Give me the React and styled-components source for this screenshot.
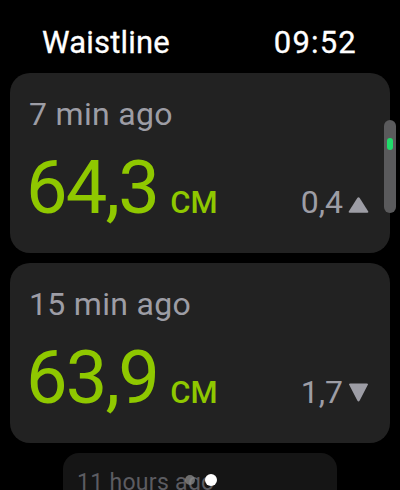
import React from "react";
import styled, { createGlobalStyle } from "styled-components";

const GlobalStyle = createGlobalStyle`
  html, body {
    margin: 0;
    padding: 0;
    background: #000;
  }
  body {
    font-family: Roboto, "Liberation Sans", sans-serif;
    -webkit-font-smoothing: antialiased;
  }
`;

const Screen = styled.div`
  position: relative;
  width: 400px;
  height: 490px;
  overflow: hidden;
  background: #000;
  display: flex;
  flex-direction: column;
`;

const Header = styled.div`
  display: flex;
  justify-content: space-between;
  align-items: baseline;
  padding: 25px 43px 0 42px;
  height: 36px;
  margin-bottom: 12px;
  color: #fff;
  font-size: 31px;
  line-height: 36px;
  font-weight: 400;
`;

const Title = styled.div`
  letter-spacing: 0.2px;
  -webkit-text-stroke: 0.3px #fff;
`;

const Clock = styled.div`
  -webkit-text-stroke: 0.3px #fff;
  font-variant-numeric: tabular-nums;
  letter-spacing: 1.2px;
`;

const List = styled.div`
  display: flex;
  flex-direction: column;
  align-items: center;
  gap: 10px;
`;

const Card = styled.div`
  box-sizing: border-box;
  width: ${(p) => (p.$faded ? "274px" : "380px")};
  height: ${(p) => (p.$faded ? "auto" : "180px")};
  flex-shrink: 0;
  background: ${(p) => (p.$faded ? "#151515" : "#222222")};
  border-radius: ${(p) => (p.$faded ? "16px" : "20px")};
  padding: ${(p) => (p.$faded ? "16px 14px 40px" : "23px 20px 0 19px")};
`;

const Label = styled.div`
  color: ${(p) => (p.$faded ? "#5c5c61" : "#9d9da5")};
  font-size: ${(p) => (p.$faded ? "23px" : "32px")};
  line-height: ${(p) => (p.$faded ? "28px" : "36px")};
  letter-spacing: 0.3px;
`;

const ValueRow = styled.div`
  display: flex;
  align-items: baseline;
  margin-top: 19px;
`;

const Value = styled.span`
  color: #8fc800;
  font-size: 74px;
  line-height: 74px;
  letter-spacing: -1.8px;
  margin-left: -3px;
`;

const Unit = styled.span`
  color: #8fc800;
  font-size: 31px;
  font-weight: 500;
  text-transform: uppercase;
  margin-left: 12px;
`;

const Delta = styled.span`
  margin-left: auto;
  display: flex;
  align-items: baseline;
  color: #9d9da5;
  font-size: 32px;
  line-height: 36px;
`;

const Arrow = styled.svg`
  display: block;
  flex-shrink: 0;
  width: 21px;
  height: ${(p) => (p.$down ? "19px" : "16px")};
  margin-left: 5px;
  margin-right: 1px;
  transform: translateY(${(p) => (p.$down ? "-1px" : "0")});
`;

const ScrollTrack = styled.div`
  position: absolute;
  top: 120px;
  right: 4px;
  width: 12px;
  height: 93px;
  border-radius: 6px;
  background: #5a5a5c;
`;

const ScrollThumb = styled.div`
  position: absolute;
  top: 18px;
  left: 3px;
  width: 6px;
  height: 12px;
  border-radius: 3px;
  background: #1fdc6a;
`;

const Dots = styled.div`
  position: absolute;
  left: 185px;
  top: 474px;
  display: flex;
  align-items: center;
  gap: 10px;
`;

const Dot = styled.div`
  width: ${(p) => (p.$active ? "12px" : "10px")};
  height: ${(p) => (p.$active ? "12px" : "10px")};
  border-radius: 50%;
  background: ${(p) => (p.$active ? "#fff" : "rgba(140,140,140,0.75)")};
`;

function Triangle({ down }) {
  return down ? (
    <Arrow $down viewBox="0 0 21 19">
      <path
        d="M2.3 0.5 L18.7 0.5 Q20.6 0.5 19.7 2.1 L11.7 17.6 Q10.5 19.4 9.3 17.6 L1.3 2.1 Q0.4 0.5 2.3 0.5 Z"
        fill="#9d9da5"
      />
    </Arrow>
  ) : (
    <Arrow viewBox="0 0 21 16">
      <path
        d="M1.8 15.8 L19.2 15.8 Q20.9 15.8 20.1 14.3 L11.7 0.9 Q10.5 -0.6 9.3 0.9 L0.9 14.3 Q0.1 15.8 1.8 15.8 Z"
        fill="#9d9da5"
      />
    </Arrow>
  );
}

const entries = [
  { when: "7 min ago", value: "64,3", delta: "0,4", down: false },
  { when: "15 min ago", value: "63,9", delta: "1,7", down: true },
];

export default function App() {
  return (
    <Screen>
      <GlobalStyle />
      <Header>
        <Title>Waistline</Title>
        <Clock>09:52</Clock>
      </Header>
      <List>
        {entries.map((e) => (
          <Card key={e.when}>
            <Label>{e.when}</Label>
            <ValueRow>
              <Value>{e.value}</Value>
              <Unit>см</Unit>
              <Delta>
                {e.delta}
                <Triangle down={e.down} />
              </Delta>
            </ValueRow>
          </Card>
        ))}
        <Card $faded>
          <Label $faded>11 hours ago</Label>
        </Card>
      </List>
      <ScrollTrack>
        <ScrollThumb />
      </ScrollTrack>
      <Dots>
        <Dot />
        <Dot $active />
      </Dots>
    </Screen>
  );
}
